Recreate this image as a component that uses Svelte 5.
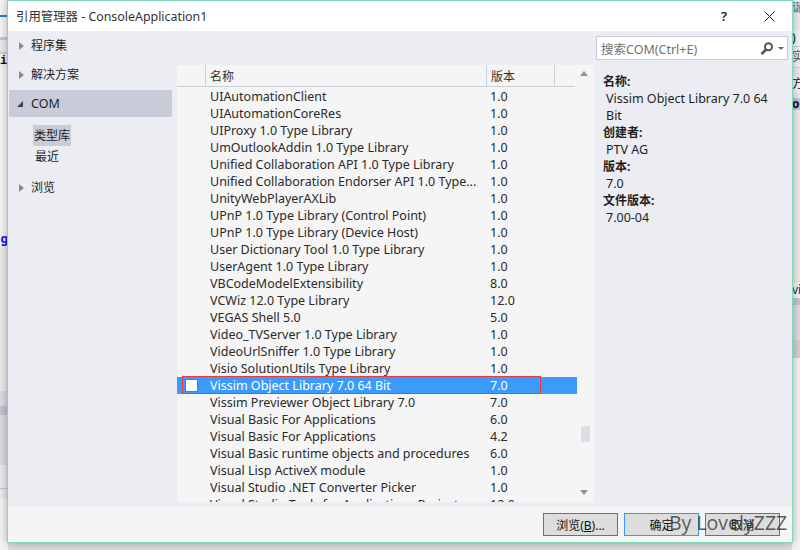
<script>
  const rows = [
    ['UIAutomationClient', '1.0'],
    ['UIAutomationCoreRes', '1.0'],
    ['UIProxy 1.0 Type Library', '1.0'],
    ['UmOutlookAddin 1.0 Type Library', '1.0'],
    ['Unified Collaboration API 1.0 Type Library', '1.0'],
    ['Unified Collaboration Endorser API 1.0 Type...', '1.0'],
    ['UnityWebPlayerAXLib', '1.0'],
    ['UPnP 1.0 Type Library (Control Point)', '1.0'],
    ['UPnP 1.0 Type Library (Device Host)', '1.0'],
    ['User Dictionary Tool 1.0 Type Library', '1.0'],
    ['UserAgent 1.0 Type Library', '1.0'],
    ['VBCodeModelExtensibility', '8.0'],
    ['VCWiz 12.0 Type Library', '12.0'],
    ['VEGAS Shell 5.0', '5.0'],
    ['Video_TVServer 1.0 Type Library', '1.0'],
    ['VideoUrlSniffer 1.0 Type Library', '1.0'],
    ['Visio SolutionUtils Type Library', '1.0'],
    ['Vissim Object Library 7.0 64 Bit', '7.0', true],
    ['Vissim Previewer Object Library 7.0', '7.0'],
    ['Visual Basic For Applications', '6.0'],
    ['Visual Basic For Applications', '4.2'],
    ['Visual Basic runtime objects and procedures', '6.0'],
    ['Visual Lisp ActiveX module', '1.0'],
    ['Visual Studio .NET Converter Picker', '1.0'],
    ['Visual Studio Tools for Applications Project', '12.0']
  ];

  const details = [
    ['名称:', 'Vissim Object Library 7.0 64 Bit'],
    ['创建者:', 'PTV AG'],
    ['版本:', '7.0'],
    ['文件版本:', '7.00-04']
  ];
</script>

<div class="desktop">
  <!-- what shows of the IDE behind the dialog -->
  <div class="behind">
    <div class="strip left">
      <i class="b white h15"></i>
      <i class="b blue h2"></i>
      <i class="b white h20"></i>
      <i class="b steel h3"></i>
      <i class="b pale h12"></i>
      <i class="b line h2"></i>
      <b class="frag code">i</b>
      <i class="b white h162"></i>
      <b class="frag link">g</b>
      <i class="b pale h144"></i>
      <i class="b soft h15"></i>
      <i class="b tab h9"></i>
      <i class="b soft h50"></i>
      <i class="b pale h23"></i>
      <i class="b tab h1"></i>
      <i class="b pale h10"></i>
    </div>
    <div class="strip right">
      <span class="frag cjk">诞</span>
      <i class="b pale h16"></i>
      <span class="frag dark">)</span>
      <i class="b line h1"></i>
      <span class="frag cjk2">实</span>
      <i class="b line h1"></i>
      <i class="b pale h8"></i>
      <span class="frag dark">方</span>
      <i class="b pale h6"></i>
      <b class="frag bar">or</b>
      <i class="b pale h172"></i>
      <span class="frag vi">vi</span>
      <i class="b tab h7"></i>
      <i class="b soft h35"></i>
      <i class="b shade h18"></i>
    </div>
  </div>

  <div class="dialog">
    <header class="titlebar">
      <span class="title">引用管理器 - ConsoleApplication1</span>
      <span class="help">?</span>
      <svg class="close" width="11" height="11" viewBox="0 0 11 11">
        <path d="M0.5 0.5 10.5 10.5 M10.5 0.5 0.5 10.5" stroke="#222" stroke-width="1" fill="none" />
      </svg>
    </header>

    <div class="body">
      <nav class="nav">
        <div class="group first"><i class="tri"></i>程序集</div>
        <div class="group second"><i class="tri"></i>解决方案</div>
        <div class="group active"><i class="tri open"></i>COM</div>
        <div class="sub sel">类型库</div>
        <div class="sub recent">最近</div>
        <div class="group last"><i class="tri"></i>浏览</div>
      </nav>

      <section class="center">
        <div class="list">
          <div class="head">
            <span class="hcheck"></span>
            <span class="hname">名称</span>
            <span class="hver">版本</span>
          </div>
          <div class="rows">
            {#each rows as r}
              <div class="row" class:selected={r[2]}>
                <span class="cell-check">{#if r[2]}<i class="check"></i>{/if}</span>
                <span class="cell-name">{r[0]}</span>
                <span class="cell-ver">{r[1]}</span>
                {#if r[2]}<i class="redbox"></i>{/if}
              </div>
            {/each}
          </div>
          <div class="scroll">
            <i class="up"></i>
            <i class="thumb"></i>
            <i class="down"></i>
          </div>
        </div>
      </section>

      <aside class="side">
        <div class="search">
          <span class="ph">搜索COM(Ctrl+E)</span>
          <svg width="14" height="13" viewBox="0 0 14 13">
            <circle cx="8.5" cy="4.8" r="3.5" fill="none" stroke="#555" stroke-width="2" />
            <path d="M6 7.5 1.5 12" stroke="#555" stroke-width="2.6" fill="none" />
          </svg>
          <i class="caret"></i>
        </div>
        <div class="info">
          {#each details as d}
            <div class="label">{d[0]}</div>
            <div class="value">{d[1]}</div>
          {/each}
        </div>
      </aside>
    </div>

    <footer class="footer">
      <button>浏览(<u>B</u>)...</button>
      <button class="primary">确定</button>
      <button>取消</button>
    </footer>
  </div>
  <span class="mark">By LovelyZZZ</span>
</div>

<style>
  :global(body) {
    margin: 0;
    font-family: "Noto Sans", "Noto Sans CJK SC", sans-serif;
  }

  .desktop {
    position: relative;
    width: 800px;
    height: 550px;
    overflow: hidden;
    background: #e6e6e6;
  }

  .behind {
    display: flex;
    justify-content: space-between;
    height: 100%;
    background: #dedede;
  }

  .strip {
    width: 8px;
    height: 100%;
    overflow: hidden;
    display: flex;
    flex-direction: column;
    background: #f4f4f4;
  }

  .strip .b {
    display: block;
    flex: none;
  }

  .white { background: #f7f7f7; }
  .blue { background: #1f7fd8; }
  .steel { background: #c4c7cc; }
  .pale { background: #ececec; }
  .line { background: #d2d2d6; }
  .soft { background: #dedee0; }
  .tab { background: #c3c4d2; }
  .shade { background: #d2d2d2; }

  .h1 { height: 1px; }
  .h2 { height: 2px; }
  .h3 { height: 3px; }
  .h6 { height: 6px; }
  .h7 { height: 7px; }
  .h8 { height: 8px; }
  .h9 { height: 9px; }
  .h10 { height: 10px; }
  .h12 { height: 12px; }
  .h15 { height: 15px; }
  .h16 { height: 16px; }
  .h18 { height: 18px; }
  .h20 { height: 20px; }
  .h23 { height: 23px; }
  .h35 { height: 35px; }
  .h50 { height: 50px; }
  .h144 { height: 144px; }
  .h162 { height: 162px; }
  .h172 { height: 172px; }

  .frag {
    flex: none;
    display: block;
    height: 15px;
    line-height: 15px;
    font-size: 12px;
    white-space: nowrap;
    color: #111;
  }

  .code { font-family: "Liberation Mono", monospace; }
  .link { color: #1414e0; height: 16px; text-align: right; }
  .cjk { height: 14px; color: #46688a; }
  .dark { height: 16px; }
  .cjk2 { height: 20px; line-height: 20px; color: #555; }
  .bar { height: 12px; line-height: 12px; background: #c3c4d2; }
  .vi { height: 16px; line-height: 16px; color: #23236e; }

  .dialog {
    position: absolute;
    left: 7px;
    top: 0;
    width: 784px;
    height: 541px;
    display: flex;
    flex-direction: column;
    border: 1px solid #7fd8b6;
    box-shadow: 0 0 9px rgba(0, 0, 0, 0.32);
    background: #ecedf2;
    font-size: 12px;
    color: #1e1e1e;
  }

  .titlebar {
    height: 30px;
    flex: none;
    display: flex;
    align-items: center;
    padding: 0 17px 0 8px;
    background: #fff;
  }

  .title {
    flex: 1;
    font-size: 12.4px;
    color: #333;
  }

  .help {
    margin-right: 37px;
    font-size: 13px;
    font-weight: 600;
    color: #222;
  }

  .body {
    flex: 1;
    display: flex;
    min-height: 0;
  }

  .nav {
    width: 169px;
    flex: none;
    padding-left: 1px;
    box-sizing: border-box;
  }

  .group {
    height: 20px;
    line-height: 20px;
    padding-left: 22px;
    font-size: 12px;
    position: relative;
  }

  .first { margin-top: 5px; }
  .second { margin-top: 9px; }

  .active {
    width: 163px;
    box-sizing: border-box;
    height: 27px;
    line-height: 27px;
    margin-top: 5px;
    background: #c9cbd9;
    font-size: 12.5px;
  }

  .last { margin-top: 11px; }

  .tri {
    position: absolute;
    left: 10px;
    top: 6px;
    width: 0;
    height: 0;
    border-style: solid;
    border-width: 4px 0 4px 5px;
    border-color: transparent transparent transparent #8a8a8a;
  }

  .tri.open {
    left: 8px;
    top: 11px;
    border-width: 0 0 6px 6px;
    border-color: transparent transparent #444 transparent;
  }

  .sub {
    width: fit-content;
    height: 21px;
    line-height: 21px;
    margin-left: 24px;
    padding: 0 1px;
    font-size: 12px;
  }

  .sub.sel {
    margin-top: 8px;
    background: #c9cbd9;
  }

  .sub.recent {
    margin-left: 25px;
  }

  .center {
    width: 417px;
    flex: none;
    padding-top: 34px;
    box-sizing: border-box;
  }

  .list {
    position: relative;
    height: 437px;
    overflow: hidden;
    background: #f5f5f5;
  }

  .head {
    display: flex;
    height: 22px;
    line-height: 23px;
    border-bottom: 1px solid #ccced9;
    box-sizing: border-box;
    width: 398px;
    color: #333;
    font-size: 12px;
  }

  .head span {
    box-sizing: border-box;
  }

  .hcheck {
    width: 29px;
    border-right: 1px solid #ccced9;
  }

  .hname {
    width: 281px;
    padding-left: 4px;
    border-right: 1px solid #ccced9;
  }

  .hver {
    width: 68px;
    padding-left: 4px;
    border-right: 1px solid #ccced9;
  }

  .rows {
    padding-top: 1px;
    width: 400px;
  }

  .row {
    position: relative;
    display: flex;
    height: 17px;
    line-height: 17px;
    font-size: 12.5px;
    color: #2a2a2a;
    white-space: nowrap;
  }

  .selected {
    background: #3a9bfc;
    color: #fff;
  }

  .cell-check {
    width: 33px;
    flex: none;
  }

  .cell-name {
    width: 280px;
    flex: none;
    overflow: hidden;
  }

  .check {
    display: block;
    width: 11px;
    height: 11px;
    margin: 2px 0 0 8px;
    background: #fff;
    border: 1px solid #777;
  }

  .redbox {
    position: absolute;
    left: 5px;
    top: -1px;
    width: 357px;
    height: 16px;
    border: 1px solid #f0383c;
  }

  .scroll {
    position: absolute;
    right: 0;
    top: 0;
    bottom: 0;
    width: 17px;
  }

  .up, .down {
    position: absolute;
    left: 3px;
    width: 0;
    height: 0;
    border-style: solid;
    border-color: transparent;
  }

  .up {
    top: 6px;
    border-width: 0 4.5px 5px;
    border-bottom-color: #8f92a3;
  }

  .down {
    bottom: 7px;
    border-width: 5px 4.5px 0;
    border-top-color: #8f92a3;
  }

  .thumb {
    position: absolute;
    left: 4px;
    top: 361px;
    width: 9px;
    height: 16px;
    background: #dcdde6;
  }

  .side {
    flex: 1;
    padding: 5px 4px 0 2px;
    box-sizing: border-box;
  }

  .search {
    display: flex;
    align-items: center;
    height: 24px;
    box-sizing: border-box;
    border: 1px solid #c9ccd8;
    background: #fff;
    padding: 0 3px 0 4px;
    gap: 4px;
  }

  .ph {
    flex: 1;
    font-size: 12.5px;
    color: #717171;
  }

  .caret {
    width: 0;
    height: 0;
    border-style: solid;
    border-width: 3px 3px 0;
    border-color: #666 transparent transparent;
  }

  .info {
    padding: 13px 18px 0 7px;
    line-height: 17px;
  }

  .label {
    font-weight: 700;
    font-size: 12px;
  }

  .value {
    padding-left: 3px;
    font-size: 12.5px;
  }

  .footer {
    flex: none;
    height: 35px;
    display: flex;
    justify-content: flex-end;
    align-items: flex-start;
    gap: 6px;
    padding: 6px 12px 0 0;
    box-sizing: border-box;
    background: #f5f5f5;
  }

  button {
    width: 75px;
    height: 23px;
    padding: 0;
    border: 1px solid #707070;
    background: #dddddd;
    font: inherit;
    color: #111;
  }

  .primary {
    border-color: #3399ff;
  }

  .mark {
    position: absolute;
    left: 669px;
    top: 509px;
    font-family: "Open Sans", sans-serif;
    font-size: 19.5px;
    color: rgba(50, 50, 50, 0.78);
    white-space: nowrap;
  }
</style>
